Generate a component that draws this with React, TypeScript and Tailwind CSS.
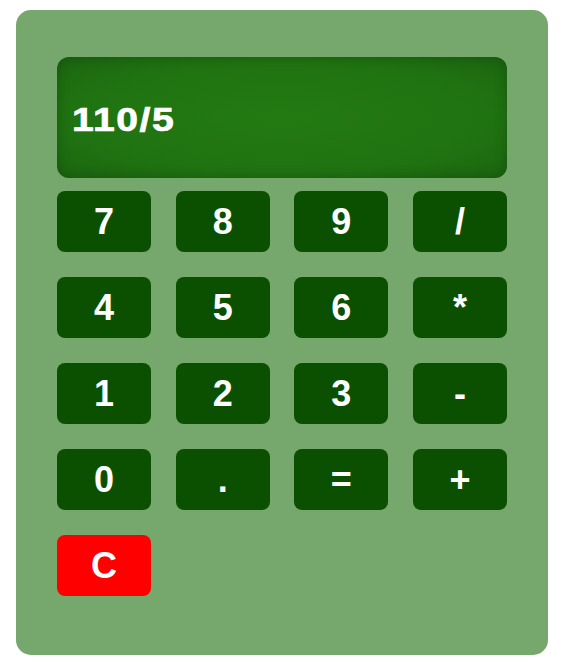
import React from "react";

const keys = ["7", "8", "9", "/", "4", "5", "6", "*", "1", "2", "3", "-", "0", ".", "=", "+"];

function App() {
  return (
    <div
      className="w-[564px] h-[666px] bg-white pt-[10px] pl-[16px]"
      style={{ fontFamily: '"Liberation Sans", Arial, sans-serif' }}
    >
      <div className="w-[532px] h-[645px] bg-[#76a76c] rounded-[15px] pt-[47px] px-[41px]">
        <div className="h-[121px] rounded-[12px] bg-[radial-gradient(ellipse_at_center,#237a13_0%,#207311_65%,#1b6610_100%)] shadow-[inset_0_0_14px_rgba(0,0,0,0.2)] flex items-center px-[15px] pt-[4px]">
          <span className="text-white font-bold text-[34px] tracking-[1.3px] inline-block scale-x-[1.15] origin-left [-webkit-text-stroke:0.7px_white]">
            110/5
          </span>
        </div>
        <div className="mt-[13px] grid grid-cols-4 gap-x-[24.7px] gap-y-[25px]">
          {keys.map((k) => (
            <button
              key={k}
              className="h-[61px] rounded-[8px] bg-[#0a5000] text-white font-bold text-[36px] flex items-center justify-center"
            >
              {k}
            </button>
          ))}
          <button className="h-[61px] rounded-[8px] bg-[#ff0000] text-white font-bold text-[36px] flex items-center justify-center">
            C
          </button>
        </div>
      </div>
    </div>
  );
}

export default App;
